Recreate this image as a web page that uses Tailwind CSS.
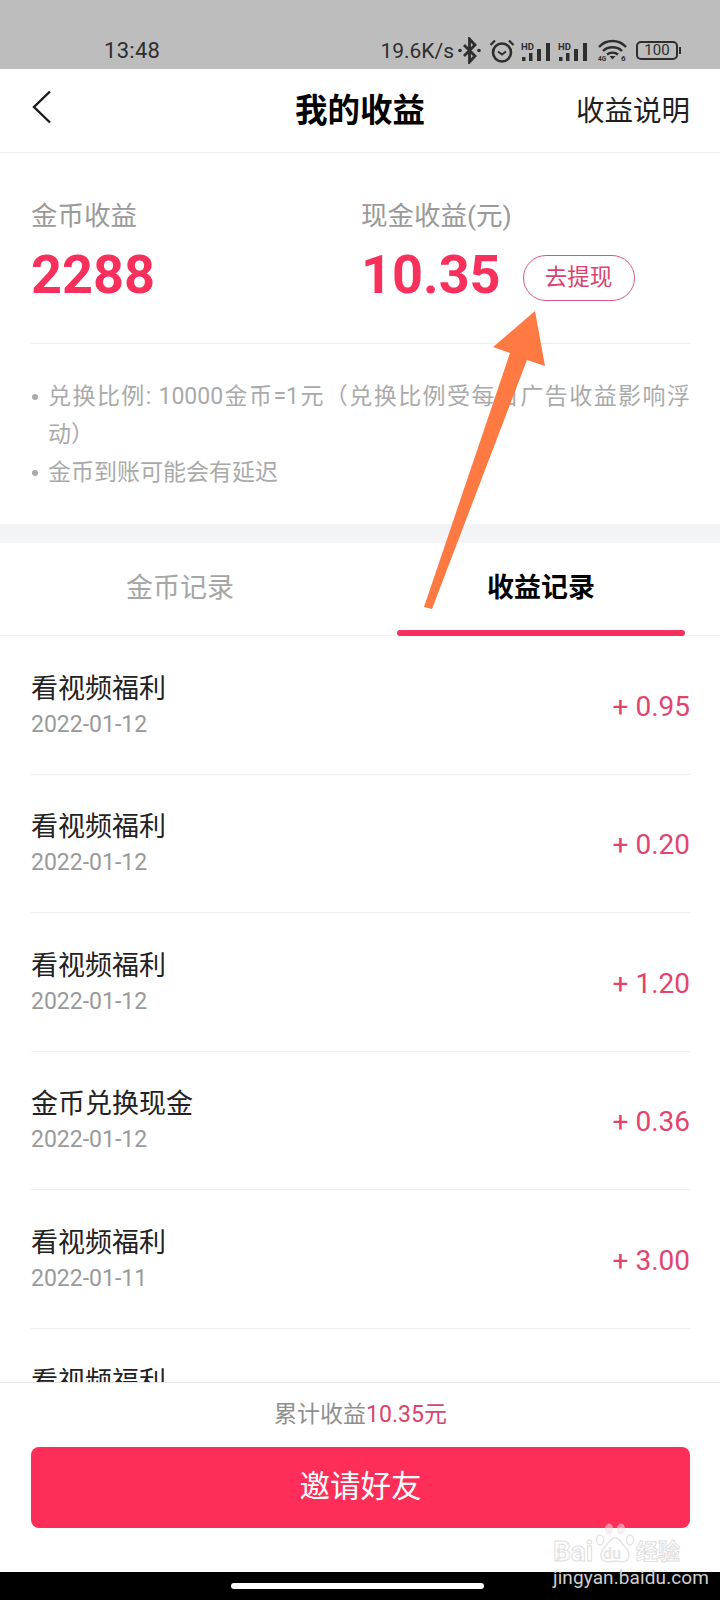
<!DOCTYPE html>
<html lang="zh-CN">
<head>
    <meta charset="UTF-8">
    <meta name="viewport" content="width=device-width, initial-scale=1.0">
    <script src="https://cdn.jsdelivr.net/npm/@tailwindcss/browser@4"></script>
</head>
<body class="bg-white">
<div class="relative w-[720px] h-[1600px] overflow-hidden flex flex-col bg-white font-['Roboto','Noto_Sans_CJK_SC',sans-serif]">

    <!-- status bar -->
    <div class="h-[69px] shrink-0 bg-[#bdbdbd] flex items-end text-[#2e2e2e] pb-[6px]">
        <span class="ml-[104px] text-[22px] leading-[24px] tracking-[0.3px]">13:48</span>
        <span class="ml-auto text-[21px] leading-[24px]">19.6K/s</span>
        <svg class="ml-[4px] mb-[-1px]" width="23" height="27" viewBox="0 0 23 27" fill="none" stroke="#2e2e2e" stroke-width="2.8"><path d="M6 8 17 19 11.500 25V2L17 8 6 19"/><circle cx="2" cy="13.500" r="1.800" fill="#2e2e2e" stroke="none"/><circle cx="21" cy="13.500" r="1.800" fill="#2e2e2e" stroke="none"/></svg>
        <svg class="ml-[8px]" width="26" height="24" viewBox="0 0 26 24" fill="none" stroke="#2e2e2e" stroke-width="2.6"><circle cx="13" cy="13.500" r="9"/><path d="M9 12.500l4 3 4-3" stroke-width="2"/><path d="M1.500 6 6 1.500M24.500 6 20 1.500" stroke-width="2.200"/></svg>
        <svg class="ml-[6px] mb-[1px]" width="32" height="20" viewBox="0 0 32 20" fill="#2e2e2e"><text x="0" y="8" font-size="9.500" font-weight="700" font-family="Roboto">HD</text><rect x="1" y="15" width="3.500" height="4"/><rect x="8" y="11" width="3.500" height="8"/><rect x="16" y="7" width="4" height="12"/><rect x="25" y="1" width="4" height="18"/></svg>
        <svg class="ml-[5px] mb-[1px]" width="32" height="20" viewBox="0 0 32 20" fill="#2e2e2e"><text x="0" y="8" font-size="9.500" font-weight="700" font-family="Roboto">HD</text><rect x="1" y="15" width="3.500" height="4"/><rect x="8" y="11" width="3.500" height="8"/><rect x="16" y="7" width="4" height="12"/><rect x="25" y="1" width="4" height="18"/></svg>
        <svg class="ml-[8px]" width="29" height="24" viewBox="0 0 29 24" fill="none" stroke="#2e2e2e" stroke-width="2.400"><path d="M1 8C8 0 21 0 28 8M5 12c5-5 14-5 19 0M9 15.500c3-2.500 8-2.500 11 0"/><path d="M11.500 17h6l-3 3.500z" fill="#2e2e2e" stroke="none"/><text x="23" y="22" font-size="8" font-weight="700" font-family="Roboto" fill="#2e2e2e" stroke="none">6</text><text x="0" y="22" font-size="6.500" font-weight="700" font-family="Roboto" fill="#2e2e2e" stroke="none">4G</text></svg>
        <span class="ml-[9px] mr-[42px] mb-[3px] relative w-[42px] h-[19px] border-2 border-[#2e2e2e] rounded-[5px] flex items-center justify-center text-[15px] leading-none">100<span class="absolute right-[-5px] top-[4px] w-[2px] h-[7px] bg-[#2e2e2e]"></span></span>
    </div>

    <!-- title bar -->
    <div class="relative h-[84px] shrink-0 border-b border-[#eeeeee] flex items-center justify-center pt-[2px]">
        <svg class="absolute left-[32px] top-[21px]" width="20" height="34" viewBox="0 0 20 34" fill="none" stroke="#1a1a1a" stroke-width="2.4"><path d="M18 1.500 2 17l16 15.500"/></svg>
        <span class="text-[32.500px] font-bold text-black leading-none">我的收益</span>
        <span class="absolute right-[30px] top-[23px] text-[28.500px] leading-[40px] text-[#1f1f1f]">收益说明</span>
    </div>

    <!-- summary -->
    <div class="shrink-0 pl-[31px] pr-[30px] pt-[48px]">
        <div class="flex border-b border-[#eeeeee] pb-[43px]">
            <div class="w-[330px]">
                <div class="text-[26.500px] leading-[30px] text-[#9a9a9a]">金币收益</div>
                <div class="mt-[19px] h-[50px] flex items-center text-[54px] font-bold leading-none text-[#f92f5c]">2288</div>
            </div>
            <div>
                <div class="text-[26.500px] leading-[30px] text-[#9a9a9a]">现金收益(元)</div>
                <div class="mt-[19px] h-[50px] flex items-center">
                    <span class="text-[54px] font-bold leading-none text-[#f92f5c]">10.35</span>
                    <span class="ml-[22px] mt-[6px] w-[112px] h-[46px] rounded-full border border-[#d9567f] flex items-center justify-center text-[22.500px] text-[#d9436f]">去提现</span>
                </div>
            </div>
        </div>
        <div class="pt-[34px] pb-[32px] text-[23px] leading-[38px] text-[#aaaaaa]">
            <div class="flex">
                <span class="w-[17px] shrink-0 pt-[16px] pl-[1px]"><span class="block w-[6px] h-[6px] rounded-full bg-[#aaaaaa]"></span></span>
                <div class="flex-1">
                    <div class="[text-align-last:justify]">兑换比例: 10000金币=1元（兑换比例受每日广告收益影响浮</div>
                    <div>动）</div>
                </div>
            </div>
            <div class="flex">
                <span class="w-[17px] shrink-0 pt-[16px] pl-[1px]"><span class="block w-[6px] h-[6px] rounded-full bg-[#aaaaaa]"></span></span>
                <span>金币到账可能会有延迟</span>
            </div>
        </div>
    </div>

    <div class="h-[19px] shrink-0 bg-[#f3f4f6]"></div>

    <!-- tabs -->
    <div class="h-[93px] shrink-0 flex border-b border-[#eeeeee] text-[27px]">
        <div class="w-[360px] flex items-center justify-center pb-[1px] text-[#a6a6a6]">金币记录</div>
        <div class="relative w-[360px] flex items-center justify-center pb-[1px] pl-[2px] font-bold text-black">
            收益记录
            <span class="absolute left-[37px] bottom-[-1px] w-[288px] h-[6px] rounded-[3px] bg-[#f5305f]"></span>
        </div>
    </div>

    <!-- records -->
    <div class="flex-1 overflow-hidden pl-[31px] pr-[30px]">
        <div class="h-[138.500px] flex items-center justify-between pt-[4px] border-b border-[#eeeeee]">
            <div>
                <div class="text-[27px] leading-[36px] text-[#222222]">看视频福利</div>
                <div class="text-[23px] leading-[36px] text-[#9a9a9a]">2022-01-12</div>
            </div>
            <div class="text-[28px] text-[#e2446f]">+ 0.95</div>
        </div>
        <div class="h-[138.500px] flex items-center justify-between pt-[4px] border-b border-[#eeeeee]">
            <div>
                <div class="text-[27px] leading-[36px] text-[#222222]">看视频福利</div>
                <div class="text-[23px] leading-[36px] text-[#9a9a9a]">2022-01-12</div>
            </div>
            <div class="text-[28px] text-[#e2446f]">+ 0.20</div>
        </div>
        <div class="h-[138.500px] flex items-center justify-between pt-[4px] border-b border-[#eeeeee]">
            <div>
                <div class="text-[27px] leading-[36px] text-[#222222]">看视频福利</div>
                <div class="text-[23px] leading-[36px] text-[#9a9a9a]">2022-01-12</div>
            </div>
            <div class="text-[28px] text-[#e2446f]">+ 1.20</div>
        </div>
        <div class="h-[138.500px] flex items-center justify-between pt-[4px] border-b border-[#eeeeee]">
            <div>
                <div class="text-[27px] leading-[36px] text-[#222222]">金币兑换现金</div>
                <div class="text-[23px] leading-[36px] text-[#9a9a9a]">2022-01-12</div>
            </div>
            <div class="text-[28px] text-[#e2446f]">+ 0.36</div>
        </div>
        <div class="h-[138.500px] flex items-center justify-between pt-[4px] border-b border-[#eeeeee]">
            <div>
                <div class="text-[27px] leading-[36px] text-[#222222]">看视频福利</div>
                <div class="text-[23px] leading-[36px] text-[#9a9a9a]">2022-01-11</div>
            </div>
            <div class="text-[28px] text-[#e2446f]">+ 3.00</div>
        </div>
        <div class="pt-[35px] text-[27px] leading-[36px] text-[#222222]">看视频福利</div>
    </div>

    <!-- footer -->
    <div class="shrink-0 border-t border-[#e6e6e6] pl-[31px] pr-[30px] pt-[17px] pb-[44px] bg-white">
        <div class="text-center text-[23px] leading-[30px] text-[#8f8f8f]">累计收益<span class="text-[#d9436f]">10.35元</span></div>
        <div class="mt-[17px] h-[81px] rounded-[8px] bg-[#ff2e58] flex items-center justify-center pb-[2px] text-[30.500px] text-white">邀请好友</div>
    </div>

    <!-- nav bar -->
    <div class="h-[28px] shrink-0 bg-black pt-[11px]">
        <span class="block ml-[231px] w-[253px] h-[6px] rounded-[3px] bg-white"></span>
    </div>

    <!-- annotation arrow drawn over the screenshot -->
    <svg class="absolute left-0 top-0 pointer-events-none" width="720" height="1600" viewBox="0 0 720 1600">
        <polygon points="535,311 493,347 510,353 424,607 432,609 527,360 545,366" fill="#ff7a42"/>
    </svg>

    <!-- baidu watermark -->
    <div class="absolute left-[553px] top-[1523px] w-[130px] h-[62px] pointer-events-none">
        <svg class="absolute left-[42px] top-0" width="40" height="42" viewBox="0 0 40 42" fill="#ffffff" fill-opacity=".55" stroke="#e4e4e4" stroke-width="1.500"><ellipse cx="14" cy="6" rx="4" ry="5.500" fill="#f3dfe6" stroke="none"/><ellipse cx="26" cy="6" rx="4" ry="5.500" fill="#f3dfe6" stroke="none"/><ellipse cx="5" cy="17" rx="3.500" ry="5"/><ellipse cx="35" cy="17" rx="3.500" ry="5"/><path d="M20 15c-5 0-6 5-10 9-4 4-5 8-3 12 2 4 8 3 13 2 5 1 11 2 13-2 2-4 1-8-3-12-4-4-5-9-10-9z"/></svg>
        <span class="absolute left-0 top-[15px] text-[28px] leading-[28px] font-bold text-white/60 [-webkit-text-stroke:1px_#e0e0e0]">Bai</span>
        <span class="absolute left-[50px] top-[23px] text-[16px] leading-[16px] font-bold text-[#e6e6e6]">du</span>
        <span class="absolute left-[83px] top-[17px] text-[22px] leading-[24px] font-bold text-white/60 [-webkit-text-stroke:1px_#e0e0e0]">经验</span>
        <span class="absolute left-0 top-[44px] text-[19px] leading-[22px] tracking-[0.1px] text-[#cfcfcf]">jingyan.baidu.com</span>
    </div>
</div>
</body>
</html>
